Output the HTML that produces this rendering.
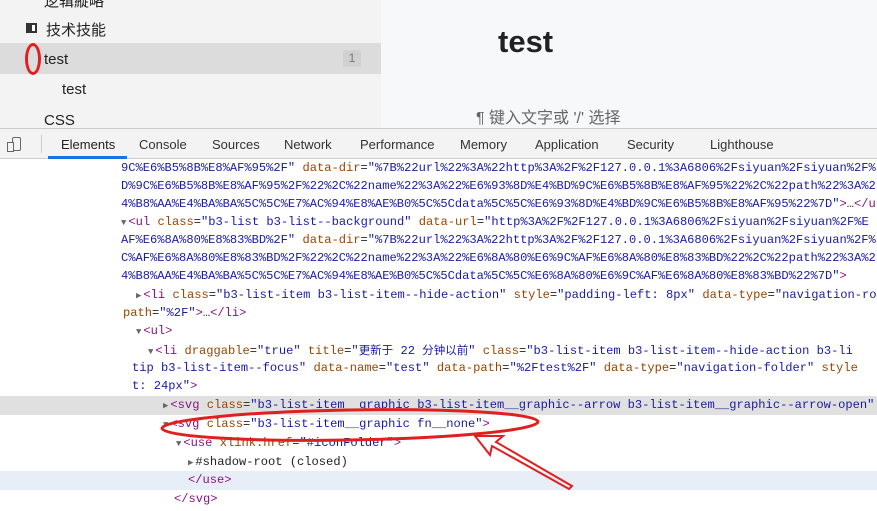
<!DOCTYPE html>
<html><head><meta charset="utf-8"><style>
*{margin:0;padding:0;box-sizing:border-box}
body{width:877px;height:511px;overflow:hidden;background:#fff;font-family:"Liberation Sans","Noto Sans CJK SC",sans-serif;position:relative}
.side{position:absolute;left:0;top:0;width:381px;height:128px;background:#f3f3f3}
.main{position:absolute;left:381px;top:0;width:496px;height:128px;background:#f7f8fa}
.t{position:absolute;font-size:15px;color:#222}
.tabs{position:absolute;left:0;top:128px;width:877px;height:31px;background:#f3f3f3;border-top:1px solid #ccc;border-bottom:1px solid #ccc}
.tab{position:absolute;top:8px;font-size:13px;color:#333}
.code{position:absolute;left:0;top:159px;width:877px;height:352px;font-family:"Liberation Mono",monospace;font-size:12.1px;color:#1a1aa6}
.l{position:absolute;height:18.5px;line-height:18px;white-space:nowrap;overflow:hidden;right:0}
.g{color:#881280}.a{color:#994500}.k{color:#222}.ar{color:#666;font-size:9px;margin-right:2px}
.cj{font-family:"Noto Sans CJK SC",sans-serif;font-size:11.5px}
</style></head><body>
<div class="side">
<div class="t" style="left:44px;top:-10px">逻辑縱略</div>
<div style="position:absolute;left:26px;top:23px;width:11px;height:10px;background:#333;border:1px solid #333"><div style="position:absolute;right:1px;top:1px;width:3px;height:6px;background:#fff"></div></div>
<div class="t" style="left:46px;top:19px">技术技能</div>
<div style="position:absolute;left:0;top:43px;width:381px;height:31px;background:#dcdcdc"></div>
<div class="t" style="left:44px;top:51px">test</div>
<div style="position:absolute;left:343px;top:50px;width:18px;height:17px;background:#d0d0d0;border-radius:3px;font-size:12px;color:#777;text-align:center;line-height:17px">1</div>
<div class="t" style="left:62px;top:81px">test</div>
<div class="t" style="left:44px;top:112px">CSS</div>
<div style="position:absolute;left:25px;top:43px;width:16px;height:32px;border:3px solid #e02020;border-radius:50%"></div>
</div>
<div class="main">
<div style="position:absolute;left:117px;top:24px;font-size:31px;font-weight:bold;color:#222">test</div>
<div style="position:absolute;left:95px;top:104px;font-size:16px;color:#666">¶ 键入文字或 '/' 选择</div>
</div>
<div class="tabs">
<div style="position:absolute;left:12px;top:8px;width:9px;height:14px;border:1.5px solid #666;border-radius:2px;background:#f3f3f3"></div>
<div style="position:absolute;left:7px;top:13px;width:7px;height:10px;border:1.5px solid #666;background:#f3f3f3"></div>
<div style="position:absolute;left:41px;top:6px;width:1px;height:18px;background:#ccc"></div>
<div class="tab" style="left:61px;color:#222">Elements</div>
<div style="position:absolute;left:48px;top:27px;width:79px;height:3px;background:#1a73e8"></div>
<div class="tab" style="left:139px">Console</div>
<div class="tab" style="left:212px">Sources</div>
<div class="tab" style="left:284px">Network</div>
<div class="tab" style="left:360px">Performance</div>
<div class="tab" style="left:460px">Memory</div>
<div class="tab" style="left:535px">Application</div>
<div class="tab" style="left:627px">Security</div>
<div class="tab" style="left:710px">Lighthouse</div>
</div>
<div class="code">
<div class="l" style="top:0;left:121px">9C%E6%B5%8B%E8%AF%95%2F"<span class="a"> data-dir</span><span class="k">=</span>"%7B%22url%22%3A%22http%3A%2F%2F127.0.0.1%3A6806%2Fsiyuan%2Fsiyuan%2F%</div>
<div class="l" style="top:18px;left:121px">D%9C%E6%B5%8B%E8%AF%95%2F%22%2C%22name%22%3A%22%E6%93%8D%E4%BD%9C%E6%B5%8B%E8%AF%95%22%2C%22path%22%3A%2</div>
<div class="l" style="top:36px;left:121px">4%B8%AA%E4%BA%BA%5C%5C%E7%AC%94%E8%AE%B0%5C%5Cdata%5C%5C%E6%93%8D%E4%BD%9C%E6%B5%8B%E8%AF%95%22%7D"<span class="g">&gt;</span><span class="k">…</span><span class="g">&lt;/u</span></div>
<div class="l" style="top:54px;left:121px"><span class="ar">▼</span><span class="g">&lt;ul</span> <span class="a">class</span><span class="k">=</span>"b3-list b3-list--background" <span class="a">data-url</span><span class="k">=</span>"http%3A%2F%2F127.0.0.1%3A6806%2Fsiyuan%2Fsiyuan%2F%E</div>
<div class="l" style="top:72px;left:121px">AF%E6%8A%80%E8%83%BD%2F" <span class="a">data-dir</span><span class="k">=</span>"%7B%22url%22%3A%22http%3A%2F%2F127.0.0.1%3A6806%2Fsiyuan%2Fsiyuan%2F%</div>
<div class="l" style="top:90px;left:121px">C%AF%E6%8A%80%E8%83%BD%2F%22%2C%22name%22%3A%22%E6%8A%80%E6%9C%AF%E6%8A%80%E8%83%BD%22%2C%22path%22%3A%2</div>
<div class="l" style="top:108px;left:121px">4%B8%AA%E4%BA%BA%5C%5C%E7%AC%94%E8%AE%B0%5C%5Cdata%5C%5C%E6%8A%80%E6%9C%AF%E6%8A%80%E8%83%BD%22%7D"<span class="g">&gt;</span></div>
<div class="l" style="top:127px;left:136px"><span class="ar">▶</span><span class="g">&lt;li</span> <span class="a">class</span><span class="k">=</span>"b3-list-item b3-list-item--hide-action" <span class="a">style</span><span class="k">=</span>"padding-left: 8px" <span class="a">data-type</span><span class="k">=</span>"navigation-ro</div>
<div class="l" style="top:145px;left:123px"><span class="a">path</span><span class="k">=</span>"%2F"<span class="g">&gt;</span><span class="k">…</span><span class="g">&lt;/li&gt;</span></div>
<div class="l" style="top:163px;left:136px"><span class="ar">▼</span><span class="g">&lt;ul&gt;</span></div>
<div class="l" style="top:182px;left:148px"><span class="ar">▼</span><span class="g">&lt;li</span> <span class="a">draggable</span><span class="k">=</span>"true" <span class="a">title</span><span class="k">=</span>"<span class="cj">更新于</span> 22 <span class="cj">分钟以前</span>" <span class="a">class</span><span class="k">=</span>"b3-list-item b3-list-item--hide-action b3-li</div>
<div class="l" style="top:200px;left:132px">tip b3-list-item--focus" <span class="a">data-name</span><span class="k">=</span>"test" <span class="a">data-path</span><span class="k">=</span>"%2Ftest%2F" <span class="a">data-type</span><span class="k">=</span>"navigation-folder" <span class="a">style</span></div>
<div class="l" style="top:218px;left:132px">t: 24px"<span class="g">&gt;</span></div>
<div style="position:absolute;left:0;top:237px;width:877px;height:19px;background:#e0e0e0"></div>
<div class="l" style="top:237px;left:163px"><span class="ar">▶</span><span class="g">&lt;svg</span> <span class="a">class</span><span class="k">=</span>"b3-list-item__graphic b3-list-item__graphic--arrow b3-list-item__graphic--arrow-open"</div>
<div class="l" style="top:256px;left:163px"><span class="ar">▼</span><span class="g">&lt;svg</span> <span class="a">class</span><span class="k">=</span>"b3-list-item__graphic fn__none"<span class="g">&gt;</span></div>
<div class="l" style="top:275px;left:176px"><span class="ar">▼</span><span class="g">&lt;use</span> <span class="a">xlink:href</span><span class="k">=</span>"#iconFolder"<span class="g">&gt;</span></div>
<div class="l" style="top:294px;left:188px;color:#222"><span class="ar">▶</span>#shadow-root (closed)</div>
<div style="position:absolute;left:0;top:312px;width:877px;height:19px;background:#e8eef8"></div>
<div class="l" style="top:312px;left:188px"><span class="g">&lt;/use&gt;</span></div>
<div class="l" style="top:331px;left:174px"><span class="g">&lt;/svg&gt;</span></div>
</div>
<svg style="position:absolute;left:0;top:0" width="877" height="511">
<ellipse cx="350" cy="425" rx="188" ry="15" fill="none" stroke="#e02020" stroke-width="3" transform="rotate(-1 350 425)"/>
<path d="M475 436 L503 436 L496 442 L572 486 L569 489 L492 446 L490 455 Z" fill="none" stroke="#e02020" stroke-width="2"/>
</svg>
</body></html>
